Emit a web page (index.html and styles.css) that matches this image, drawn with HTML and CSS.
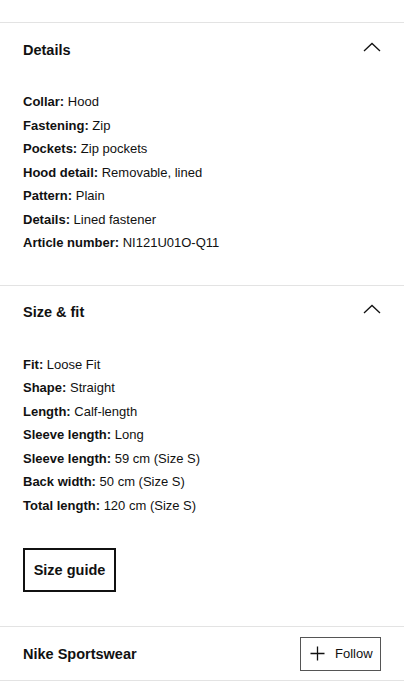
FILE: index.html
```html
<!DOCTYPE html>
<html>
<head>
<meta charset="utf-8">
<link rel="stylesheet" href="styles.css">
</head>
<body>
<div class="top-space"></div>
<section class="section">
  <div class="section-head">
    <h2 class="section-title">Details</h2>
    <svg class="chevron" width="18" height="10" viewBox="0 0 18 10"><path d="M1 9 L9 1.5 L17 9" fill="none" stroke="#111" stroke-width="1.3"/></svg>
  </div>
  <ul class="attrs">
    <li><b>Collar:</b> Hood</li>
    <li><b>Fastening:</b> Zip</li>
    <li><b>Pockets:</b> Zip pockets</li>
    <li><b>Hood detail:</b> Removable, lined</li>
    <li><b>Pattern:</b> Plain</li>
    <li><b>Details:</b> Lined fastener</li>
    <li><b>Article number:</b> NI121U01O-Q11</li>
  </ul>
</section>
<section class="section">
  <div class="section-head">
    <h2 class="section-title">Size &amp; fit</h2>
    <svg class="chevron" width="18" height="10" viewBox="0 0 18 10"><path d="M1 9 L9 1.5 L17 9" fill="none" stroke="#111" stroke-width="1.3"/></svg>
  </div>
  <ul class="attrs">
    <li><b>Fit:</b> Loose Fit</li>
    <li><b>Shape:</b> Straight</li>
    <li><b>Length:</b> Calf-length</li>
    <li><b>Sleeve length:</b> Long</li>
    <li><b>Sleeve length:</b> 59 cm (Size S)</li>
    <li><b>Back width:</b> 50 cm (Size S)</li>
    <li><b>Total length:</b> 120 cm (Size S)</li>
  </ul>
  <div class="btn-wrap">
    <button class="size-guide">Size guide</button>
  </div>
</section>
<section class="brand">
  <span class="brand-name">Nike Sportswear</span>
  <button class="follow">
    <svg width="15" height="15" viewBox="0 0 15 15"><path d="M7.5 0.5 V14.5 M0.5 7.5 H14.5" fill="none" stroke="#111" stroke-width="1.3"/></svg>
    <span>Follow</span>
  </button>
</section>
</body>
</html>
```
FILE: styles.css
```css
* { box-sizing: border-box; }
body {
  margin: 0;
  background: #fff;
  color: #111;
  font-family: "Liberation Sans", Arial, sans-serif;
}
.top-space { height: 22px; }
.section {
  border-top: 1px solid #e3e3e3;
  padding: 0 23px 30px 23px;
}
.section-head {
  height: 53px;
  display: flex;
  align-items: center;
  justify-content: space-between;
}
.section-title {
  margin: 0;
  font-size: 14.5px;
  font-weight: bold;
}
.chevron {
  margin-top: -6px;
}
.attrs {
  list-style: none;
  margin: 14px 0 0 0;
  padding: 0;
  font-size: 13px;
  line-height: 23.5px;
}
.attrs b { font-weight: bold; }
.btn-wrap {
  padding-top: 31px;
  padding-bottom: 4px;
}
.size-guide {
  font-family: "Liberation Sans", Arial, sans-serif;
  font-size: 14.5px;
  font-weight: bold;
  color: #111;
  background: #fff;
  border: 2px solid #111;
  height: 44px;
  width: 93px;
  padding: 0;
  cursor: pointer;
}
.brand {
  border-top: 1px solid #e3e3e3;
  border-bottom: 1px solid #e3e3e3;
  height: 55px;
  display: flex;
  align-items: center;
  justify-content: space-between;
  padding: 0 23px;
}
.brand-name {
  font-size: 14.5px;
  font-weight: bold;
}
.follow {
  display: flex;
  align-items: center;
  gap: 10px;
  height: 34px;
  width: 81px;
  padding: 0 0 0 9px;
  background: #fff;
  border: 1px solid #555;
  font-family: "Liberation Sans", Arial, sans-serif;
  font-size: 13px;
  color: #111;
  cursor: pointer;
}
```
